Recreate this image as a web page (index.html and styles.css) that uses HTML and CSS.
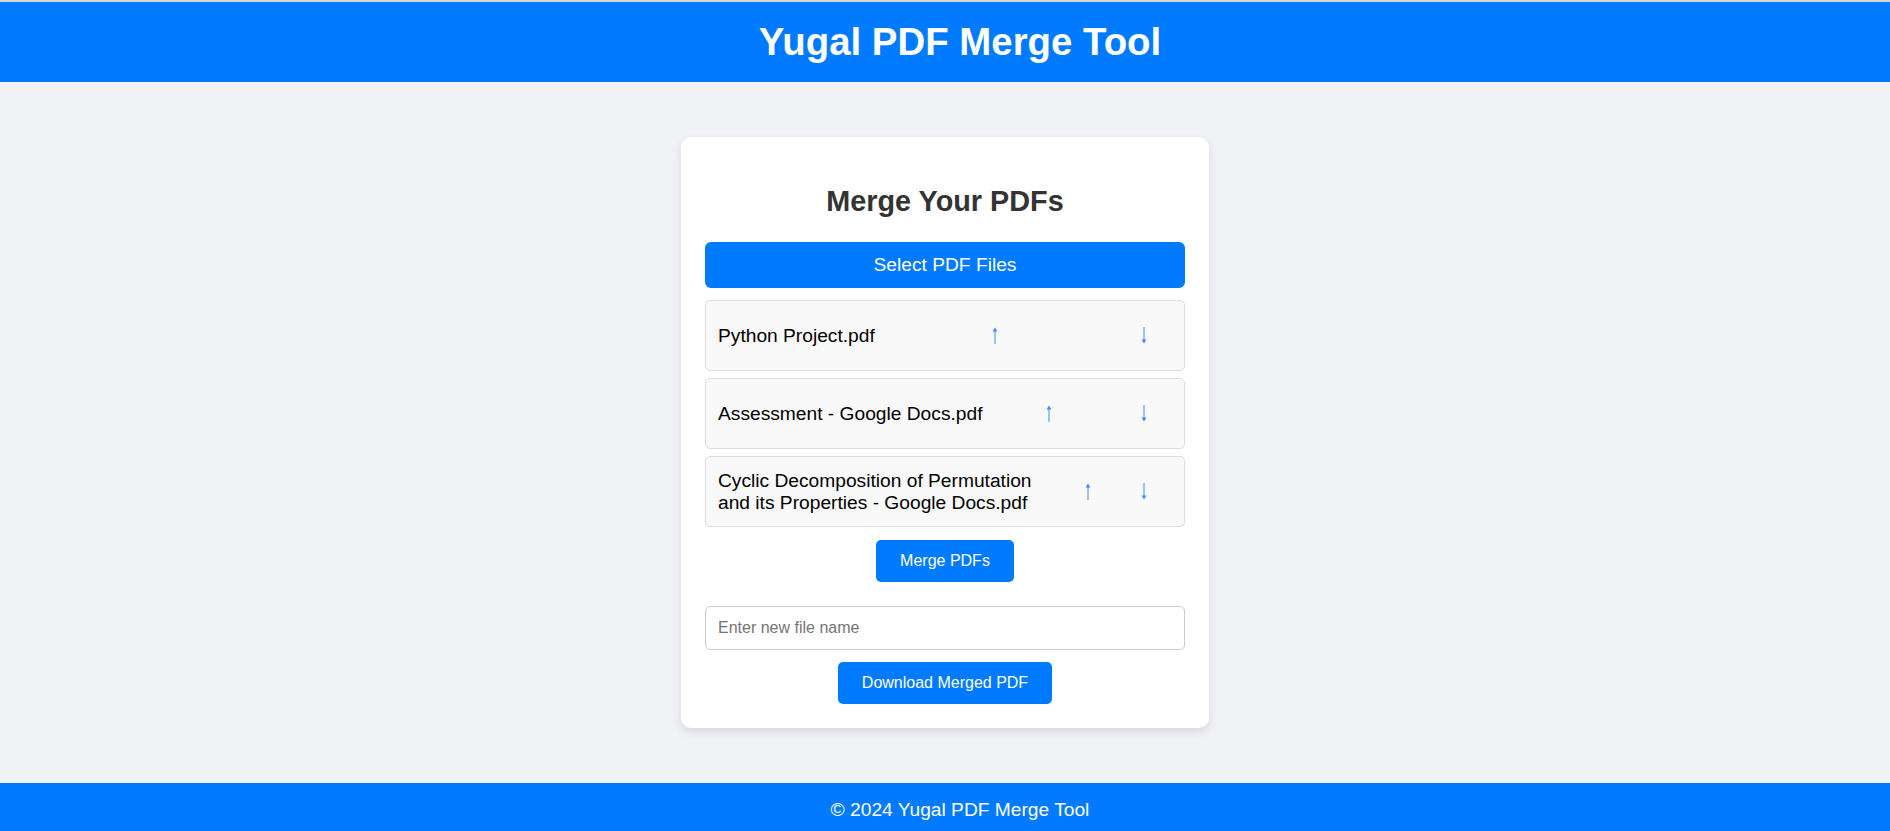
FILE: index.html
```html
<!DOCTYPE html>
<html lang="en">
<head>
<meta charset="UTF-8">
<title>Yugal PDF Merge Tool</title>
<link rel="stylesheet" href="styles.css">
</head>
<body>
<header class="site-header">
  <h1 class="site-title">Yugal PDF Merge Tool</h1>
</header>
<main class="main">
  <section class="card">
    <h2 class="card-title">Merge Your PDFs</h2>
    <label class="select-btn">Select PDF Files</label>
    <ul class="file-list">
      <li class="file-item">
        <span class="file-name">Python Project.pdf</span>
        <button class="arrow-btn" aria-label="Move up"><svg class="arrow" viewBox="0 0 8 17"><path d="M4 3.5V17" /><path class="head" d="M1.6 4.6L4 0.6L6.4 4.6Z" /></svg></button>
        <button class="arrow-btn" aria-label="Move down"><svg class="arrow" viewBox="0 0 8 17"><path d="M4 0V13.5" /><path class="head" d="M1.6 12.4L4 16.4L6.4 12.4Z" /></svg></button>
      </li>
      <li class="file-item">
        <span class="file-name">Assessment - Google Docs.pdf</span>
        <button class="arrow-btn" aria-label="Move up"><svg class="arrow" viewBox="0 0 8 17"><path d="M4 3.5V17" /><path class="head" d="M1.6 4.6L4 0.6L6.4 4.6Z" /></svg></button>
        <button class="arrow-btn" aria-label="Move down"><svg class="arrow" viewBox="0 0 8 17"><path d="M4 0V13.5" /><path class="head" d="M1.6 12.4L4 16.4L6.4 12.4Z" /></svg></button>
      </li>
      <li class="file-item">
        <span class="file-name">Cyclic Decomposition of Permutation and its Properties - Google Docs.pdf</span>
        <button class="arrow-btn" aria-label="Move up"><svg class="arrow" viewBox="0 0 8 17"><path d="M4 3.5V17" /><path class="head" d="M1.6 4.6L4 0.6L6.4 4.6Z" /></svg></button>
        <button class="arrow-btn" aria-label="Move down"><svg class="arrow" viewBox="0 0 8 17"><path d="M4 0V13.5" /><path class="head" d="M1.6 12.4L4 16.4L6.4 12.4Z" /></svg></button>
      </li>
    </ul>
    <div class="action-row">
      <button class="primary-btn">Merge PDFs</button>
    </div>
    <input class="name-input" type="text" placeholder="Enter new file name">
    <div class="action-row action-row-tight">
      <button class="primary-btn">Download Merged PDF</button>
    </div>
  </section>
</main>
<footer class="site-footer">
  <p class="footer-text">© 2024 Yugal PDF Merge Tool</p>
</footer>
</body>
</html>
```
FILE: styles.css
```css
* {
  box-sizing: border-box;
}

body {
  margin: 0;
  font-family: "Liberation Sans", Arial, sans-serif;
  background: #f0f2f5;
  color: #333;
}

.site-header {
  background: #007bff;
  border-top: 2px solid #d7d7d7;
  height: 82px;
  padding-left: 30px;
  display: flex;
  align-items: center;
  justify-content: center;
}

.site-title {
  margin: 0;
  color: #fff;
  font-size: 38.4px;
  font-weight: bold;
}

.main {
  padding: 55px 0;
}

.card {
  width: 528px;
  margin: 0 auto;
  background: #fff;
  border-radius: 10px;
  box-shadow: 0 4px 10px rgba(0, 0, 0, 0.1);
  padding: 24px;
}

.card-title {
  margin: 24px 0;
  font-size: 28.8px;
  font-weight: bold;
  text-align: center;
  color: #333;
}

.select-btn {
  display: flex;
  align-items: center;
  justify-content: center;
  height: 46px;
  background: #007bff;
  color: #fff;
  font-size: 19.2px;
  border-radius: 6px;
}

.file-list {
  list-style: none;
  margin: 12px 0 0;
  padding: 0;
  display: flex;
  flex-direction: column;
  gap: 7px;
}

.file-item {
  display: flex;
  align-items: center;
  justify-content: space-between;
  min-height: 71px;
  padding: 12px;
  background: #f9f9f9;
  border: 1px solid #ddd;
  border-radius: 5px;
  font-size: 19.2px;
  color: #000;
}

.arrow-btn {
  flex: none;
  display: flex;
  align-items: center;
  justify-content: center;
  background: none;
  border: none;
  padding: 12px 24px;
}

.arrow {
  display: block;
  width: 8px;
  height: 17px;
}

.arrow path {
  fill: none;
  stroke: #3b8cff;
  stroke-width: 1;
}

.arrow .head {
  fill: #3b8cff;
  stroke: none;
}

.action-row {
  display: flex;
  justify-content: center;
  margin: 13px 0 24px;
}

.action-row-tight {
  margin: 12px 0 0;
}

.primary-btn {
  background: #007bff;
  color: #fff;
  border: none;
  border-radius: 5px;
  padding: 12px 24px;
  font-family: "Liberation Sans", Arial, sans-serif;
  font-size: 16px;
}

.name-input {
  display: block;
  width: 100%;
  padding: 12px;
  border: 1px solid #ccc;
  border-radius: 5px;
  font-family: "Liberation Sans", Arial, sans-serif;
  font-size: 16px;
  background: #fff;
}

.name-input::placeholder {
  color: #757575;
}

.site-footer {
  background: #007bff;
  padding: 16px 0 10px 30px;
  text-align: center;
}

.footer-text {
  margin: 0;
  color: #fff;
  font-size: 19.2px;
}
```
